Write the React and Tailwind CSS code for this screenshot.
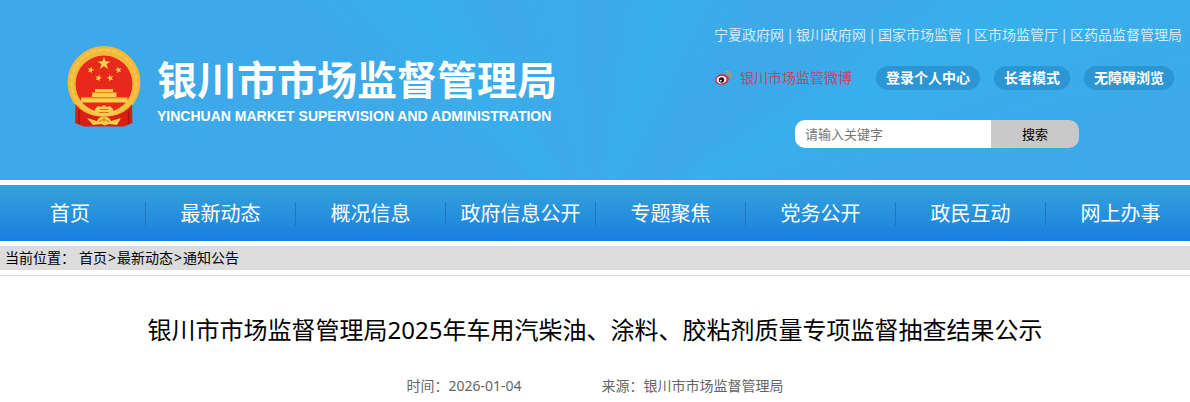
const topLinks = ['宁夏政府网', '银川政府网', '国家市场监管', '区市场监管厅', '区药品监督管理局']

const tools = ['登录个人中心', '长者模式', '无障碍浏览']

const navItems = ['首页', '最新动态', '概况信息', '政府信息公开', '专题聚焦', '党务公开', '政民互动', '网上办事']

const crumbs = ['首页', '最新动态', '通知公告']

const STAR = 'M0-10 2.4-3.2 9.5-3.1 3.8 1.2 5.9 8.1 0 4 -5.9 8.1 -3.8 1.2 -9.5-3.1 -2.4-3.2Z'

function Emblem() {
  return (
    <svg viewBox="0 0 74 81" className="w-[74px] h-[81px] shrink-0" aria-hidden="true">
      <circle cx="37" cy="36.5" r="36.5" fill="#f3b93a" />
      <circle cx="37" cy="36.5" r="32.5" fill="none" stroke="#f8c94c" strokeWidth="2" strokeDasharray="5 2" />
      <path d="M8.5 58 8 77 17 80.500H57L65.500 77 65 58C54 75 20 75 8.500 58Z" fill="#d81f16" />
      <path d="M12 64v14M61.500 64v14" stroke="#a91510" strokeWidth="1.500" />
      <circle cx="37" cy="38" r="28.500" fill="#e8281b" />
      <g fill="#fbcf4a">
        <path d={STAR} transform="translate(37 17.500) scale(.68)" />
        <path d={STAR} transform="translate(23.700 24) rotate(15) scale(.36)" />
        <path d={STAR} transform="translate(51.500 24) rotate(-15) scale(.36)" />
        <path d={STAR} transform="translate(31.500 32) rotate(15) scale(.36)" />
        <path d={STAR} transform="translate(43.300 32) rotate(-15) scale(.36)" />
        <path d="M28 43h18v3H28Z" />
        <path d="M25 46.500h24.500v4.500H25Z" />
        <path d="M14 51.500h46.500v5H14Z" />
      </g>
      <path d="M26 46.500h22M14 52h46" stroke="#d98a22" strokeWidth=".8" />
      <path d="M9 56C17 60 24 67.500 30 67.500h14c6 0 13-7.500 21-11.500" fill="none" stroke="#f7c544" strokeWidth="3.500" />
      <path d="M28 63l3-3 3 1 3-2 3 2 3-1 3 3 1 4-4 3H31l-4-3Z" fill="#f9cc4c" />
      <path d="M33 63.500h8M32 66.500h10" stroke="#cf7a1c" strokeWidth="1" />
      <path d="M20 72l10 3c1-3 4-4.500 7-4.500s6 1.500 7 4.500l10-3-4 7-8-1-4 1.500-4-1.500-8 1Z" fill="#f9cc4c" />
      <path d="M32 76c3-3 7-3 10 0M37 71v5" fill="none" stroke="#cf7a1c" strokeWidth="1" />
    </svg>
  )
}

function WeiboIcon() {
  return (
    <svg viewBox="0 0 18 16" className="w-[18px] h-4" aria-hidden="true">
      <ellipse cx="8" cy="9.500" rx="7" ry="5.300" fill="#d42f45" transform="rotate(-10 8 9.500)" />
      <ellipse cx="7.500" cy="9.700" rx="5" ry="3.700" fill="#fff" transform="rotate(-10 7.500 9.700)" />
      <circle cx="7.500" cy="10" r="2.700" fill="#1c1418" />
      <circle cx="6.700" cy="10.600" r=".9" fill="#fff" />
      <path d="M12 1.500c3-.5 5 1.500 4.500 4.500M12.300 4c1.200-.2 2 .6 1.800 1.700" fill="none" stroke="#bfa05c" strokeWidth="1.300" strokeLinecap="round" />
    </svg>
  )
}

export default function App() {
  return (
    <div className="min-h-screen bg-white text-black text-[14px] font-['Noto_Sans','Noto_Sans_CJK_SC',sans-serif]">
      <header className="flex items-start justify-between min-h-[180px] bg-[#3da9e9] bg-[conic-gradient(from_0deg_at_50%_130%,#3da9e9_0deg,#38afeb_16deg,#3da9e9_38deg,#3da9e9_50deg,#38afeb_62deg,#3da9e9_80deg,#3da9e9_280deg,#3da9e9_305deg,#38afeb_322deg,#3da9e9_338deg,#3aadea_350deg,#3da9e9_360deg)]">
        <a href="#" className="flex gap-4 pl-[67px] pt-[46px] text-white">
          <Emblem />
          <div className="pt-3 whitespace-nowrap">
            <h1 className="text-[40px] leading-[44px] font-bold">银川市市场监督管理局</h1>
            <p className="mt-1 text-[14px] leading-5 font-bold font-['Liberation_Sans',sans-serif]">
              YINCHUAN MARKET SUPERVISION AND ADMINISTRATION
            </p>
          </div>
        </a>

        <div className="pt-6 pr-2 whitespace-nowrap">
          <ul className="flex leading-[22px] text-[#d3ebfa]">
            {topLinks.map((item, index) => (
              <li key={item}>
                {index > 0 && <span className="inline-block w-3 text-center">|</span>}
                <a href="#">{item}</a>
              </li>
            ))}
          </ul>

          <div className="flex items-center mt-5">
            <a href="#" className="flex items-center gap-2 mr-6 leading-6 text-[#bb4a6a]">
              <WeiboIcon />
              银川市场监管微博
            </a>
            <div className="flex gap-[14px]">
              {tools.map(item => (
                <button key={item} type="button" className="h-6 px-[10px] rounded-full bg-[#2c96d5] leading-6 font-bold text-white">
                  {item}
                </button>
              ))}
            </div>
          </div>

          <form className="flex w-[284px] h-7 mt-[30px] ml-[81px] rounded-[10px] overflow-hidden text-[13px]" onSubmit={event => event.preventDefault()}>
            <input
              type="text"
              aria-label="请输入关键字"
              placeholder="请输入关键字"
              className="flex-1 min-w-0 px-[10px] pt-[2px] bg-white placeholder-[#757575] outline-none"
            />
            <button type="submit" className="w-[88px] pt-[2px] bg-[#c9c9c9]">搜索</button>
          </form>
        </div>
      </header>

      <nav className="mt-[5px] overflow-hidden bg-linear-to-b from-[#36a3d9] to-[#1a7ee0]">
        <ul className="flex justify-center items-center h-14 pt-[2px]">
          {navItems.map(item => (
            <li key={item} className="w-[150px] shrink-0 border-l border-[#2272bd] first:border-l-0 text-[20px] leading-6 text-center">
              <a href="#" className="text-white">{item}</a>
            </li>
          ))}
        </ul>
      </nav>

      <div className="mt-[5px] flex h-6 px-[5px] bg-[#dcdcdc] leading-6">
        <span className="mr-1">当前位置：</span>
        {crumbs.map((item, index) => (
          <span key={item}>
            {index > 0 && <span className="inline-block w-[10px] text-center">&gt;</span>}
            <a href="#">{item}</a>
          </span>
        ))}
      </div>

      <main className="mt-[5px] pt-9 border-t border-[#d8d8d8] text-center">
        <h2 className="text-[24px] leading-9">银川市市场监督管理局2025年车用汽柴油、涂料、胶粘剂质量专项监督抽查结果公示</h2>
        <div className="flex justify-center gap-20 mt-7 leading-5 text-[#666]">
          <span>时间：2026-01-04</span>
          <span>来源：银川市市场监督管理局</span>
        </div>
      </main>
    </div>
  )
}
